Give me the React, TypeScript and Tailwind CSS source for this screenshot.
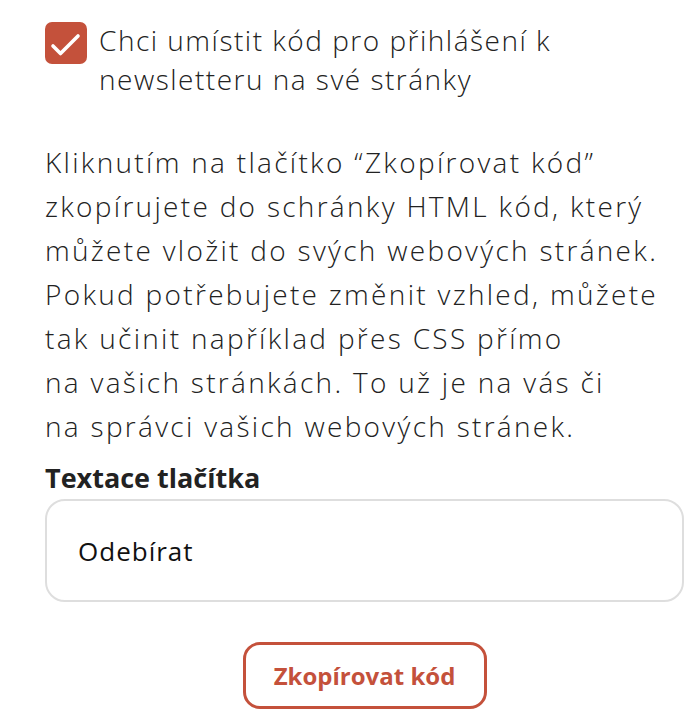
import { useState } from 'react'

export default function App() {
  const [checked, setChecked] = useState(true)
  const [label, setLabel] = useState('Odebírat')

  return (
    <div className="min-h-[722px] bg-white pl-[45px] pr-[14px] pt-[21px] text-[#222]" style={{ fontFamily: '"Open Sans", sans-serif' }}>
      <label className="flex items-start gap-[12px] cursor-pointer">
        <button
          type="button"
          onClick={() => setChecked(!checked)}
          className={'mt-[1px] flex h-[42px] w-[42px] shrink-0 items-center justify-center rounded-[7px] ' + (checked ? 'bg-[#c4513b]' : 'border-2 border-gray-300 bg-white')}
        >
          {checked && (
            <svg width="42" height="42" viewBox="0 0 42 42" fill="none" stroke="white" strokeWidth="3.6" strokeLinecap="round" strokeLinejoin="round">
              <path d="M8 24l7.5 7.5L33 14" />
            </svg>
          )}
        </button>
        <span className="whitespace-nowrap text-[28px] font-[350] leading-[39px] tracking-[1.5px]">
          Chci umístit kód pro přihlášení k<br />newsletteru na své stránky
        </span>
      </label>

      <p className="mt-[41px] whitespace-nowrap text-[28px] font-[350] leading-[44px] tracking-[2.3px]">
        Kliknutím na tlačítko “Zkopírovat kód”<br />
        zkopírujete do schránky HTML kód, který<br />
        můžete vložit do svých webových stránek.<br />
        Pokud potřebujete změnit vzhled, můžete<br />
        tak učinit například přes CSS přímo<br />
        na vašich stránkách. To už je na vás či<br />
        na správci vašich webových stránek.
      </p>

      <div className="mt-[13px] text-[27px] font-bold leading-[34px] text-[#222]">Textace tlačítka</div>
      <input
        value={label}
        onChange={e => setLabel(e.target.value)}
        className="mt-[4px] h-[103px] w-full rounded-[20px] border-2 border-[#dedede] px-[31px] text-[26px] tracking-[1px] text-[#111] outline-none"
      />

      <div className="mt-[40px] flex justify-center">
        <button className="h-[67px] w-[244px] rounded-[17px] border-[3px] border-[#c4513b] text-[24px] font-bold text-[#c4513b]">
          Zkopírovat kód
        </button>
      </div>
    </div>
  )
}
